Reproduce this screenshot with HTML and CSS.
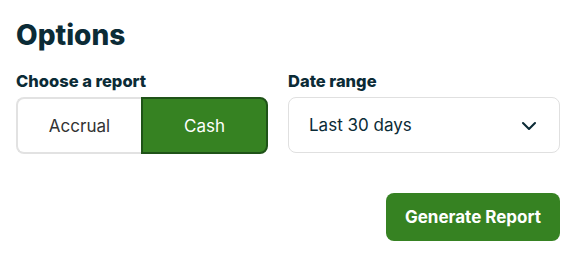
FILE: index.html
```html
<!DOCTYPE html>
<html lang="en">
<head>
    <meta charset="UTF-8">
    <meta name="viewport" content="width=device-width, initial-scale=1.0">
    <title>Options</title>
    <link rel="stylesheet" href="styles.css">
</head>
<body>
    <div class="options">
        <h1>Options</h1>
        <div class="fields">
            <div class="field">
                <label>Choose a report</label>
                <div class="toggle">
                    <button type="button" class="toggle-item">Accrual</button>
                    <button type="button" class="toggle-item active">Cash</button>
                </div>
            </div>
            <div class="field">
                <label>Date range</label>
                <div class="select">
                    <span>Last 30 days</span>
                    <svg width="24" height="24" viewBox="0 0 24 24" fill="none" stroke="#0b2b36" stroke-width="2.1" stroke-linecap="round" stroke-linejoin="round"><path d="M6 9l6 6 6-6"/></svg>
                </div>
            </div>
        </div>
        <div class="actions">
            <button type="button" class="generate">Generate Report</button>
        </div>
    </div>
</body>
</html>
```

FILE: styles.css
```css
body {
    font-family: 'Inter', 'Liberation Sans', sans-serif;
    background-color: #fff;
    margin: 0;
    color: #0b2b36;
}

.options {
    padding: 18px 19px 0 16px;
}

h1 {
    font-size: 28px;
    line-height: 34px;
    font-weight: 800;
    margin: 0 0 19px;
    color: #0b2b36;
}

.fields {
    display: grid;
    grid-template-columns: 252px 1fr;
    gap: 20px;
}

.field label {
    display: block;
    font-size: 16.5px;
    line-height: 20px;
    font-weight: 800;
    margin-bottom: 6px;
}

.toggle {
    display: flex;
    height: 57px;
}

.toggle-item {
    flex: 1;
    font-family: inherit;
    font-size: 17px;
    color: #333;
    background-color: #fff;
    border: 2px solid #e2e2e2;
    cursor: pointer;
}

.toggle-item:first-child {
    border-right: none;
    border-radius: 8px 0 0 8px;
}

.toggle-item.active {
    background-color: #368222;
    color: #fff;
    border-color: #1f5318;
    border-radius: 0 8px 8px 0;
}

.select {
    height: 56px;
    box-sizing: border-box;
    border: 1px solid #e0e0e0;
    border-radius: 8px;
    display: flex;
    align-items: center;
    justify-content: space-between;
    padding: 0 18px 0 20px;
    font-size: 17px;
}

.select svg {
    margin-top: 2px;
}

.actions {
    display: flex;
    justify-content: flex-end;
    margin-top: 39px;
}

.generate {
    height: 48px;
    padding: 0 19px;
    font-family: inherit;
    font-size: 17px;
    font-weight: 700;
    color: #fff;
    background-color: #368222;
    border: none;
    border-radius: 8px;
    cursor: pointer;
}
```
